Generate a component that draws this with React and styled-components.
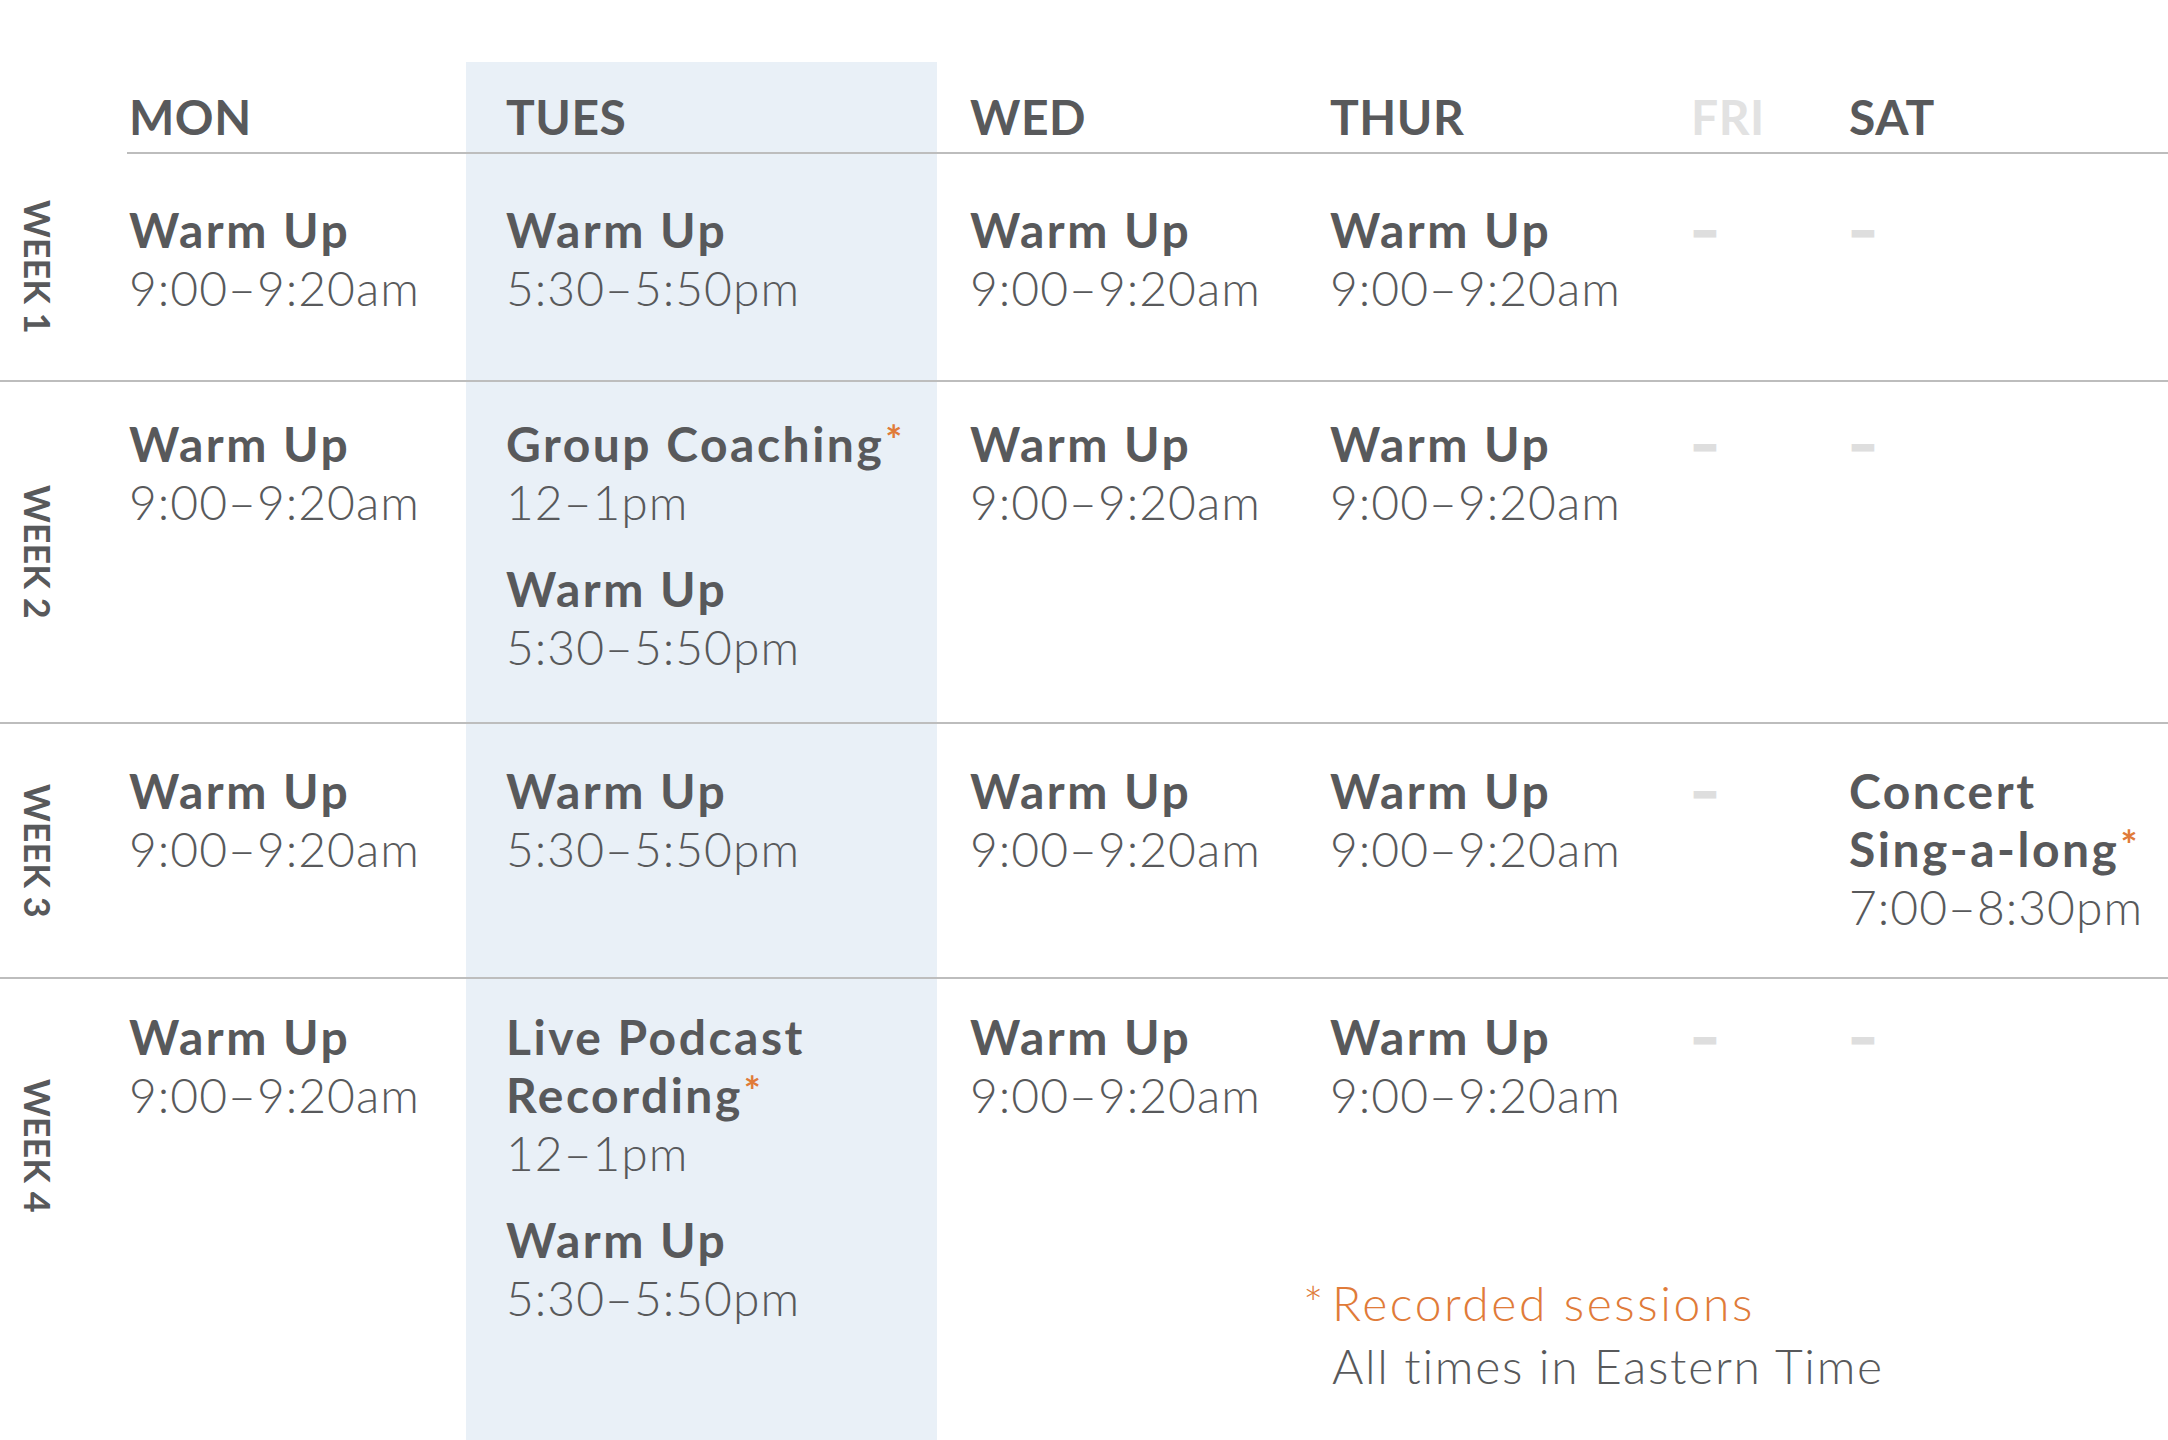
import React from "react";
import styled, { createGlobalStyle } from "styled-components";

const GlobalStyle = createGlobalStyle`
  html, body {
    margin: 0;
    padding: 0;
    background: #fff;
  }
  body {
    font-family: Lato, "Open Sans", sans-serif;
    color: #58595b;
  }
`;

const INK = "#58595b";
const BLUE = "#e9f0f7";
const ORANGE = "#e07b39";
const RULE = "2px solid #bdbdbd";

const Schedule = styled.div`
  display: grid;
  grid-template-columns: 127px 339px 471px 393px 361px 158px 1fr;
  grid-template-rows: auto auto auto auto 1fr;
  min-height: 100vh;
  padding-top: 62px;
  box-sizing: border-box;
`;

const Corner = styled.div``;

const HeadCell = styled.div`
  padding: 26px 0 6px ${(p) => p.$pad}px;
  border-bottom: ${RULE};
  background: ${(p) => (p.$highlight ? BLUE : "transparent")};
  color: ${(p) => (p.$muted ? "#e2e2e2" : INK)};
  font-size: 48px;
  line-height: 58px;
  font-weight: 700;
  letter-spacing: 0.5px;
`;

const WeekCell = styled.div`
  display: flex;
  justify-content: flex-start;
  align-items: ${(p) => (p.$offset ? "flex-start" : "center")};
  padding: ${(p) => (p.$offset ? `${p.$offset}px 0 0 16px` : "0 0 0 16px")};
  border-bottom: ${(p) => (p.$last ? "none" : RULE)};
`;

const WeekLabel = styled.span`
  writing-mode: vertical-rl;
  font-size: 36px;
  line-height: 44px;
  font-weight: 700;
  color: ${INK};
  white-space: nowrap;
`;

const DayCell = styled.div`
  padding: ${(p) => `${p.$top}px 0 ${p.$bottom}px ${p.$pad}px`};
  background: ${(p) => (p.$highlight ? BLUE : "transparent")};
  border-bottom: ${(p) => (p.$last ? "none" : RULE)};
`;

const Event = styled.div`
  & + & {
    margin-top: 29px;
  }
`;

const Title = styled.div`
  font-size: 48px;
  line-height: 58px;
  font-weight: 700;
  letter-spacing: 2.5px;
  color: ${INK};
  white-space: nowrap;
`;

const Time = styled.div`
  font-size: 48px;
  line-height: 58px;
  font-weight: 300;
  letter-spacing: 1px;
  color: ${INK};
  white-space: nowrap;
`;

const Star = styled.span`
  font-size: 40px;
  font-weight: 700;
  letter-spacing: 0;
  color: ${ORANGE};
  margin-left: 1px;
  vertical-align: 7px;
  line-height: 0;
`;

const Dash = styled.div`
  font-size: 48px;
  line-height: 58px;
  font-weight: 900;
  color: #dedede;
  -webkit-text-stroke: 3px #dedede;
`;

const Tail = styled.div`
  grid-column: 5 / span 3;
  padding-top: ${(p) => p.$top}px;
`;

const TailRow = styled.div`
  display: grid;
  grid-template-columns: 361px 158px 1fr;
`;

const Footnote = styled.div`
  margin-top: 147px;
  padding-left: 2px;
  font-size: 48px;
  line-height: 63px;
  font-weight: 300;
  white-space: nowrap;
`;

const NoteLine = styled.div`
  color: ${(p) => (p.$accent ? ORANGE : INK)};
  letter-spacing: ${(p) => (p.$accent ? "2.6px" : "1.7px")};
`;

const NoteStar = styled.span`
  display: inline-block;
  width: 29px;
  margin-left: -29px;
  letter-spacing: 0;
`;

const days = [
  { name: "MON", pad: 2 },
  { name: "TUES", pad: 40, highlight: true },
  { name: "WED", pad: 33 },
  { name: "THUR", pad: 0 },
  { name: "FRI", pad: 0, muted: true },
  { name: "SAT", pad: 0 },
];

const am = { title: ["Warm Up"], time: "9:00–9:20am" };
const pm = { title: ["Warm Up"], time: "5:30–5:50pm" };
const coaching = { title: ["Group Coaching"], star: true, time: "12–1pm" };
const podcast = { title: ["Live Podcast", "Recording"], star: true, time: "12–1pm" };
const concert = { title: ["Concert", "Sing-a-long"], star: true, time: "7:00–8:30pm" };

const weeks = [
  { label: "WEEK 1", top: 47, bottom: 63, cells: [[am], [pm], [am], [am], null, null] },
  { label: "WEEK 2", top: 33, bottom: 46, cells: [[am], [coaching, pm], [am], [am], null, null] },
  { label: "WEEK 3", top: 38, bottom: 41, cells: [[am], [pm], [am], [am], null, [concert]] },
  { label: "WEEK 4", top: 29, bottom: 0, offset: 100, last: true, cells: [[am], [podcast, pm], [am], [am], null, null] },
];

const EventBlock = ({ ev }) => (
  <Event>
    <Title>
      {ev.title.map((line, i) => (
        <div key={i}>
          {line}
          {ev.star && i === ev.title.length - 1 && <Star>*</Star>}
        </div>
      ))}
    </Title>
    <Time>{ev.time}</Time>
  </Event>
);

const CellContent = ({ events }) =>
  events ? events.map((ev, i) => <EventBlock key={i} ev={ev} />) : <Dash>–</Dash>;

const App = () => {
  return (
    <>
      <GlobalStyle />
      <Schedule>
        <Corner />
        {days.map((d) => (
          <HeadCell key={d.name} $pad={d.pad} $highlight={d.highlight} $muted={d.muted}>
            {d.name}
          </HeadCell>
        ))}

        {weeks.map((w) => (
          <React.Fragment key={w.label}>
            <WeekCell $last={w.last} $offset={w.offset}>
              <WeekLabel>{w.label}</WeekLabel>
            </WeekCell>
            {(w.last ? days.slice(0, 3) : days).map((d, i) => (
              <DayCell
                key={d.name}
                $pad={d.pad}
                $highlight={d.highlight}
                $top={w.top}
                $bottom={w.bottom}
                $last={w.last}
              >
                <CellContent events={w.cells[i]} />
              </DayCell>
            ))}
            {w.last && (
              <Tail $top={w.top}>
                <TailRow>
                  <div>
                    <CellContent events={w.cells[3]} />
                  </div>
                  <div>
                    <CellContent events={w.cells[4]} />
                  </div>
                  <div>
                    <CellContent events={w.cells[5]} />
                  </div>
                </TailRow>
                <Footnote>
                  <NoteLine $accent>
                    <NoteStar>*</NoteStar>Recorded sessions
                  </NoteLine>
                  <NoteLine>All times in Eastern Time</NoteLine>
                </Footnote>
              </Tail>
            )}
          </React.Fragment>
        ))}
      </Schedule>
    </>
  );
};

export default App;
